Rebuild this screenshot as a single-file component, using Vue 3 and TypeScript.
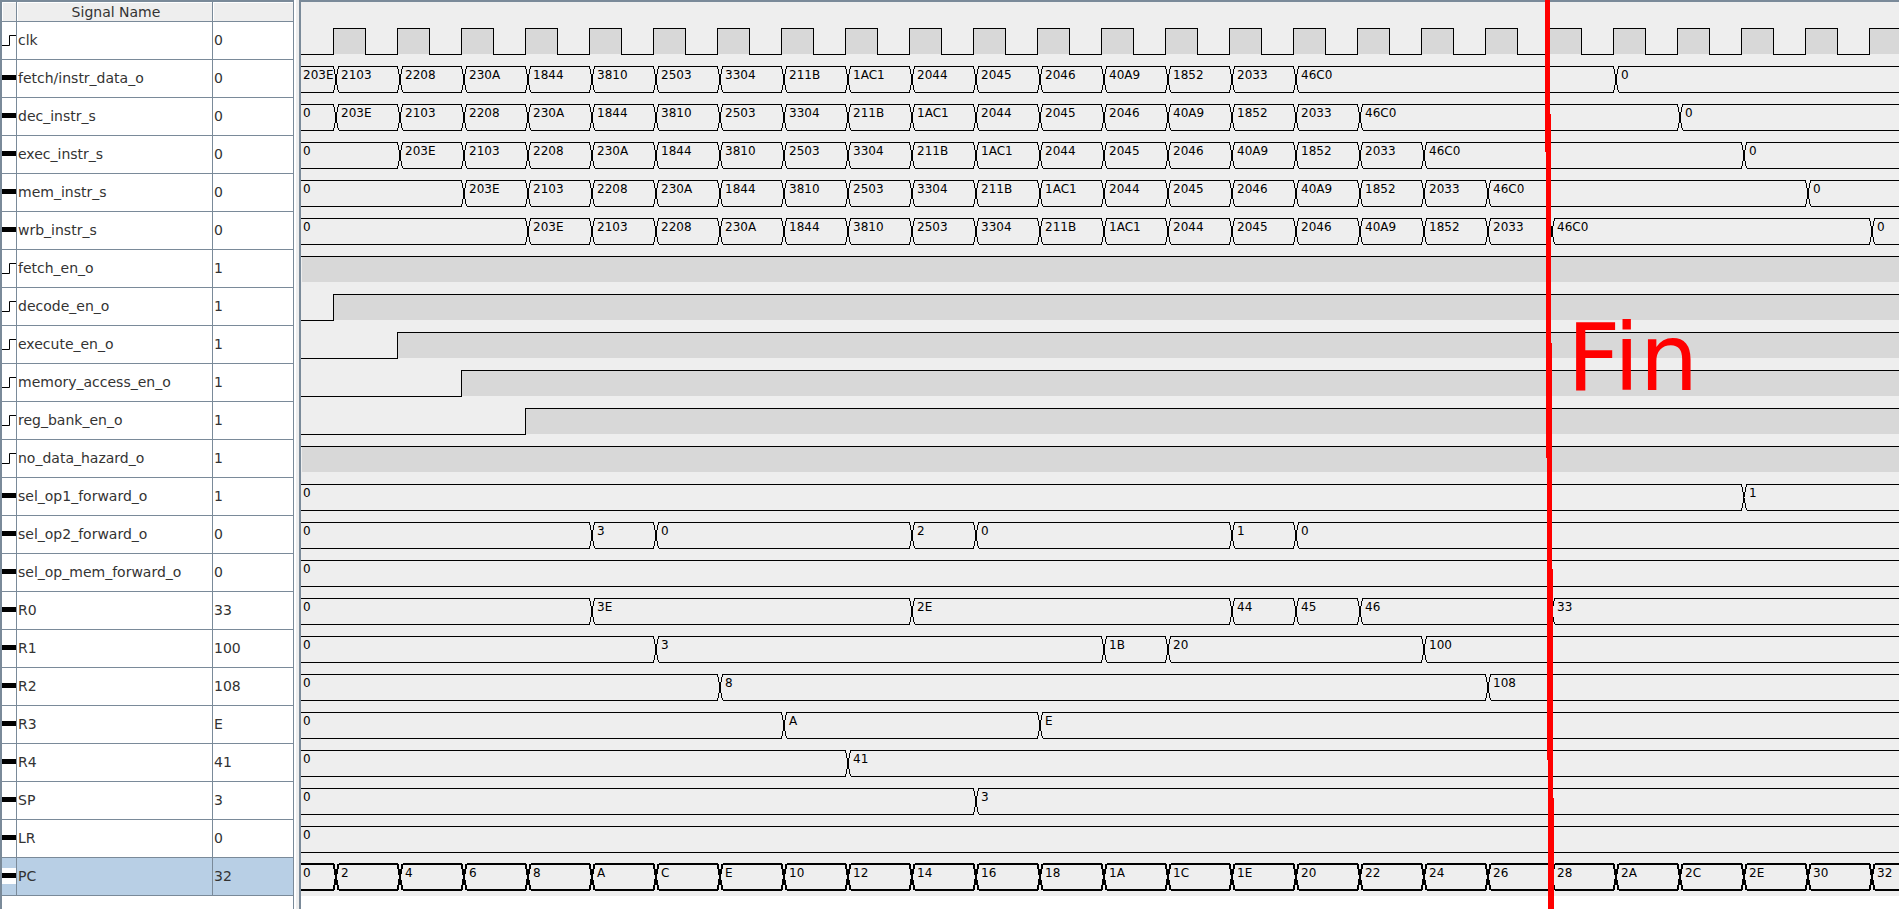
<script setup lang="ts">
interface Signal {
  name: string
  value: string
  kind: 'bit' | 'bus'
  d: string
  fill: string
  labels: { x: number; text: string }[]
  selected: boolean
}

const PERIOD = 64
const FIRST_EDGE = 32
const SPAN = 80
const TOP = 7
const BOTTOM = 33
const END = FIRST_EDGE + SPAN * PERIOD

const edgeX = (n: number): number => FIRST_EDGE + n * PERIOD

function clock(name: string, value: string): Signal {
  let d = `M0 ${BOTTOM}.5`
  let fill = ''
  for (let i = 0; i < SPAN; i++) {
    const x = edgeX(i)
    d += `H${x}.5V${TOP}.5H${x + 32}.5V${BOTTOM}.5`
    fill += `M${x} ${TOP}h32V${BOTTOM}h-32z`
  }
  return { name, value, kind: 'bit', d, fill, labels: [], selected: false }
}

function enable(name: string, rise: number | null): Signal {
  const x = rise === null ? 1 : edgeX(rise)
  const d = rise === null ? `M0 ${TOP}.5H${END}` : `M0 ${BOTTOM}.5H${x}.5V${TOP}.5H${END}`
  const fill = `M${x} ${TOP}H${END}V${BOTTOM}H${x}z`
  return { name, value: '1', kind: 'bit', d, fill, labels: [], selected: false }
}

function bus(name: string, value: string, initial: string, changes: [number, string][], selected = false): Signal {
  // Thick strokes sit on whole pixels, thin ones on half pixels.
  const half = selected ? 0 : 0.5
  const t = TOP + half
  const b = BOTTOM + half
  const labels = [{ x: 2, text: initial }]
  let upper = `M0 ${t}`
  let lower = `M0 ${b}`
  for (const [n, text] of changes) {
    const x = edgeX(n) + 0.5
    upper += `H${x}L${x + 5} ${b}`
    lower += `H${x}L${x + 5} ${t}`
    upper += `M${x + 5} ${t}`
    lower += `M${x + 5} ${b}`
    labels.push({ x: edgeX(n) + 8, text })
  }
  return { name, value, kind: 'bus', d: `${upper}H${END}${lower}H${END}`, fill: '', labels, selected }
}

const program = ['203E', '2103', '2208', '230A', '1844', '3810', '2503', '3304', '211B', '1AC1', '2044', '2045', '2046', '40A9', '1852', '2033', '46C0']

function stage(name: string, delay: number): Signal {
  const changes: [number, string][] = program.map((code, i) => [i + delay - 1, code])
  changes.push([20 + delay, '0'])
  return delay === 0 ? bus(name, '0', '203E', changes.slice(1)) : bus(name, '0', '0', changes)
}

const pc: [number, string][] = Array.from({ length: 25 }, (_, i) => [i, ((i + 1) * 2).toString(16).toUpperCase()])

const signals: Signal[] = [
  clock('clk', '0'),
  stage('fetch/instr_data_o', 0),
  stage('dec_instr_s', 1),
  stage('exec_instr_s', 2),
  stage('mem_instr_s', 3),
  stage('wrb_instr_s', 4),
  enable('fetch_en_o', null),
  enable('decode_en_o', 0),
  enable('execute_en_o', 1),
  enable('memory_access_en_o', 2),
  enable('reg_bank_en_o', 3),
  enable('no_data_hazard_o', null),
  bus('sel_op1_forward_o', '1', '0', [[22, '1']]),
  bus('sel_op2_forward_o', '0', '0', [[4, '3'], [5, '0'], [9, '2'], [10, '0'], [14, '1'], [15, '0']]),
  bus('sel_op_mem_forward_o', '0', '0', []),
  bus('R0', '33', '0', [[4, '3E'], [9, '2E'], [14, '44'], [15, '45'], [16, '46'], [19, '33']]),
  bus('R1', '100', '0', [[5, '3'], [12, '1B'], [13, '20'], [17, '100']]),
  bus('R2', '108', '0', [[6, '8'], [18, '108']]),
  bus('R3', 'E', '0', [[7, 'A'], [11, 'E']]),
  bus('R4', '41', '0', [[8, '41']]),
  bus('SP', '3', '0', [[10, '3']]),
  bus('LR', '0', '0', []),
  bus('PC', '32', '0', pc, true),
]
</script>

<template>
  <main class="viewer">
    <section class="names">
      <table>
        <colgroup><col class="c-icon"><col class="c-name"><col class="c-value"></colgroup>
        <thead>
          <tr><th></th><th scope="col">Signal Name</th><th></th></tr>
        </thead>
        <tbody>
          <tr v-for="s in signals" :key="s.name" :class="{ selected: s.selected }">
            <td class="icon">
              <svg width="14" height="16" viewBox="0 0 14 16" aria-hidden="true">
                <rect v-if="s.kind === 'bus'" width="14" height="16" fill="#fff" />
                <path v-if="s.kind === 'bus'" d="M0 5h14v5H0z" />
                <path v-else d="M0 13.5H7.5V3.5H14" fill="none" stroke="#000" />
              </svg>
            </td>
            <td>{{ s.name }}</td>
            <td>{{ s.value }}</td>
          </tr>
        </tbody>
      </table>
    </section>
    <section class="waves">
      <div class="traces">
        <svg v-for="s in signals" :key="s.name" class="trace" :class="{ selected: s.selected }">
          <path class="fill" :d="s.fill" />
          <path class="line" :d="s.d" />
          <text v-for="l in s.labels" :key="l.x" :x="l.x" y="20">{{ l.text }}</text>
        </svg>
      </div>
      <svg class="marker" aria-hidden="true" viewBox="0 0 10 909" preserveAspectRatio="none">
        <path d="M1 0H6L10 909H4z" />
      </svg>
      <span class="note">Fin</span>
    </section>
  </main>
</template>

<style>
body {
  margin: 0;
}
</style>

<style scoped>
.viewer {
  display: flex;
  min-height: 100vh;
  overflow: hidden;
  background: #fff;
  font-family: "DejaVu Sans", sans-serif;
  color: #333;
}

.names {
  flex: none;
  width: 291px;
  border: solid #7a8a99;
  border-width: 2px 1px 0 2px;
}

table {
  width: 291px;
  table-layout: fixed;
  border-collapse: separate;
  border-spacing: 0;
  font-size: 14px;
  line-height: 18px;
}

.c-icon { width: 15px; }
.c-name { width: 196px; }
.c-value { width: 80px; }

th,
td {
  box-sizing: border-box;
  padding: 0 1px;
  border: solid #7a8a99;
  border-width: 0 1px 1px 0;
  text-align: left;
  white-space: nowrap;
}

th:last-child,
td:last-child {
  border-right-width: 0;
}

th {
  height: 20px;
  padding: 0 0 0 3px;
  background: #eee;
  box-shadow: inset 1px 1px #fff;
  font-weight: 400;
  text-align: center;
}

td {
  height: 38px;
  padding-bottom: 2px;
}

td.icon {
  padding: 10px 0 0;
  vertical-align: top;
}

.icon svg {
  display: block;
}

tr.selected td {
  background: #b8cfe5;
}

.waves {
  position: relative;
  flex: 1;
  min-width: 0;
  margin-left: 5px;
  border: solid #7a8a99;
  border-width: 2px 0 0 2px;
  box-shadow: -3px 0 #eee;
}

.traces {
  padding: 19px 0 1px;
  background: #eee;
}

.trace {
  display: block;
  width: 100%;
  height: 38px;
  overflow: hidden;
}

.fill {
  fill: #d8d8d8;
}

.line {
  fill: none;
  stroke: #000;
  shape-rendering: crispEdges;
}

.selected .line {
  stroke-width: 2;
}

text {
  fill: #000;
  font-size: 12px;
}

.marker {
  position: absolute;
  top: -2px;
  left: 1243px;
  width: 10px;
  height: calc(100% + 2px);
}

.marker path {
  fill: #f00;
  shape-rendering: crispEdges;
}

.note {
  position: absolute;
  top: 301px;
  left: 1266px;
  color: #f00;
  font-size: 93px;
  line-height: 110px;
}
</style>
